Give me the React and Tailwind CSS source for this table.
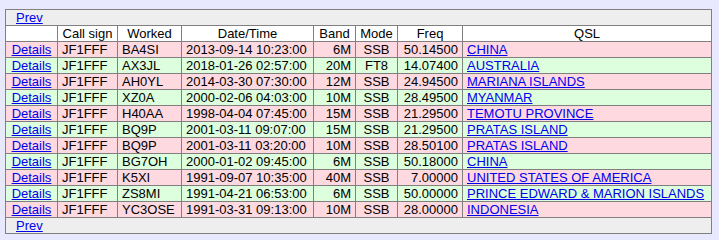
import React from "react";

const rows = [
  ["BA4SI", "2013-09-14 10:23:00", "6M", "SSB", "50.14500", "CHINA"],
  ["AX3JL", "2018-01-26 02:57:00", "20M", "FT8", "14.07400", "AUSTRALIA"],
  ["AH0YL", "2014-03-30 07:30:00", "12M", "SSB", "24.94500", "MARIANA ISLANDS"],
  ["XZ0A", "2000-02-06 04:03:00", "10M", "SSB", "28.49500", "MYANMAR"],
  ["H40AA", "1998-04-04 07:45:00", "15M", "SSB", "21.29500", "TEMOTU PROVINCE"],
  ["BQ9P", "2001-03-11 09:07:00", "15M", "SSB", "21.29500", "PRATAS ISLAND"],
  ["BQ9P", "2001-03-11 03:20:00", "10M", "SSB", "28.50100", "PRATAS ISLAND"],
  ["BG7OH", "2000-01-02 09:45:00", "6M", "SSB", "50.18000", "CHINA"],
  ["K5XI", "1991-09-07 10:35:00", "40M", "SSB", "7.00000", "UNITED STATES OF AMERICA"],
  ["ZS8MI", "1991-04-21 06:53:00", "6M", "SSB", "50.00000", "PRINCE EDWARD & MARION ISLANDS"],
  ["YC3OSE", "1991-03-31 09:13:00", "10M", "SSB", "28.00000", "INDONESIA"],
];

const td = "border border-[#808080] px-[4px] py-0 h-[16px] whitespace-nowrap";
const link = "text-[#0000ee] underline";

function PrevRow() {
  return (
    <tr className="bg-[#eeeeee]">
      <td colSpan={8} className={td + " pl-[10px] text-left"}>
        <a href="#" className={link}>Prev</a>
      </td>
    </tr>
  );
}

export default function App() {
  return (
    <div className="min-h-[240px] bg-[#e8e8ff] pt-[9px] pl-[5px]" style={{ fontFamily: '"Liberation Sans", Arial, sans-serif' }}>
      <table className="table-fixed border-collapse w-[707px] text-[13px] leading-[15px] text-black">
        <colgroup>
          <col className="w-[52px]" />
          <col className="w-[60px]" />
          <col className="w-[64px]" />
          <col className="w-[132px]" />
          <col className="w-[42px]" />
          <col className="w-[42px]" />
          <col className="w-[65px]" />
          <col className="w-[249px]" />
        </colgroup>
        <tbody>
          <PrevRow />
          <tr className="bg-white">
            <th className={td + " font-normal"}></th>
            <th className={td + " font-normal text-center"}>Call sign</th>
            <th className={td + " font-normal text-center"}>Worked</th>
            <th className={td + " font-normal text-center"}>Date/Time</th>
            <th className={td + " font-normal text-center"}>Band</th>
            <th className={td + " font-normal text-center"}>Mode</th>
            <th className={td + " font-normal text-center"}>Freq</th>
            <th className={td + " font-normal text-center"}>QSL</th>
          </tr>
          {rows.map((r, i) => (
            <tr key={i} className={i % 2 === 0 ? "bg-[#ffd9e0]" : "bg-[#ddffdd]"}>
              <td className={td + " text-center"}>
                <a href="#" className={link}>Details</a>
              </td>
              <td className={td + " text-left"}>JF1FFF</td>
              <td className={td + " text-left"}>{r[0]}</td>
              <td className={td + " text-left"}>{r[1]}</td>
              <td className={td + " text-right"}>{r[2]}</td>
              <td className={td + " text-center"}>{r[3]}</td>
              <td className={td + " text-right"}>{r[4]}</td>
              <td className={td + " text-left"}>
                <a href="#" className={link}>{r[5]}</a>
              </td>
            </tr>
          ))}
          <PrevRow />
        </tbody>
      </table>
    </div>
  );
}
